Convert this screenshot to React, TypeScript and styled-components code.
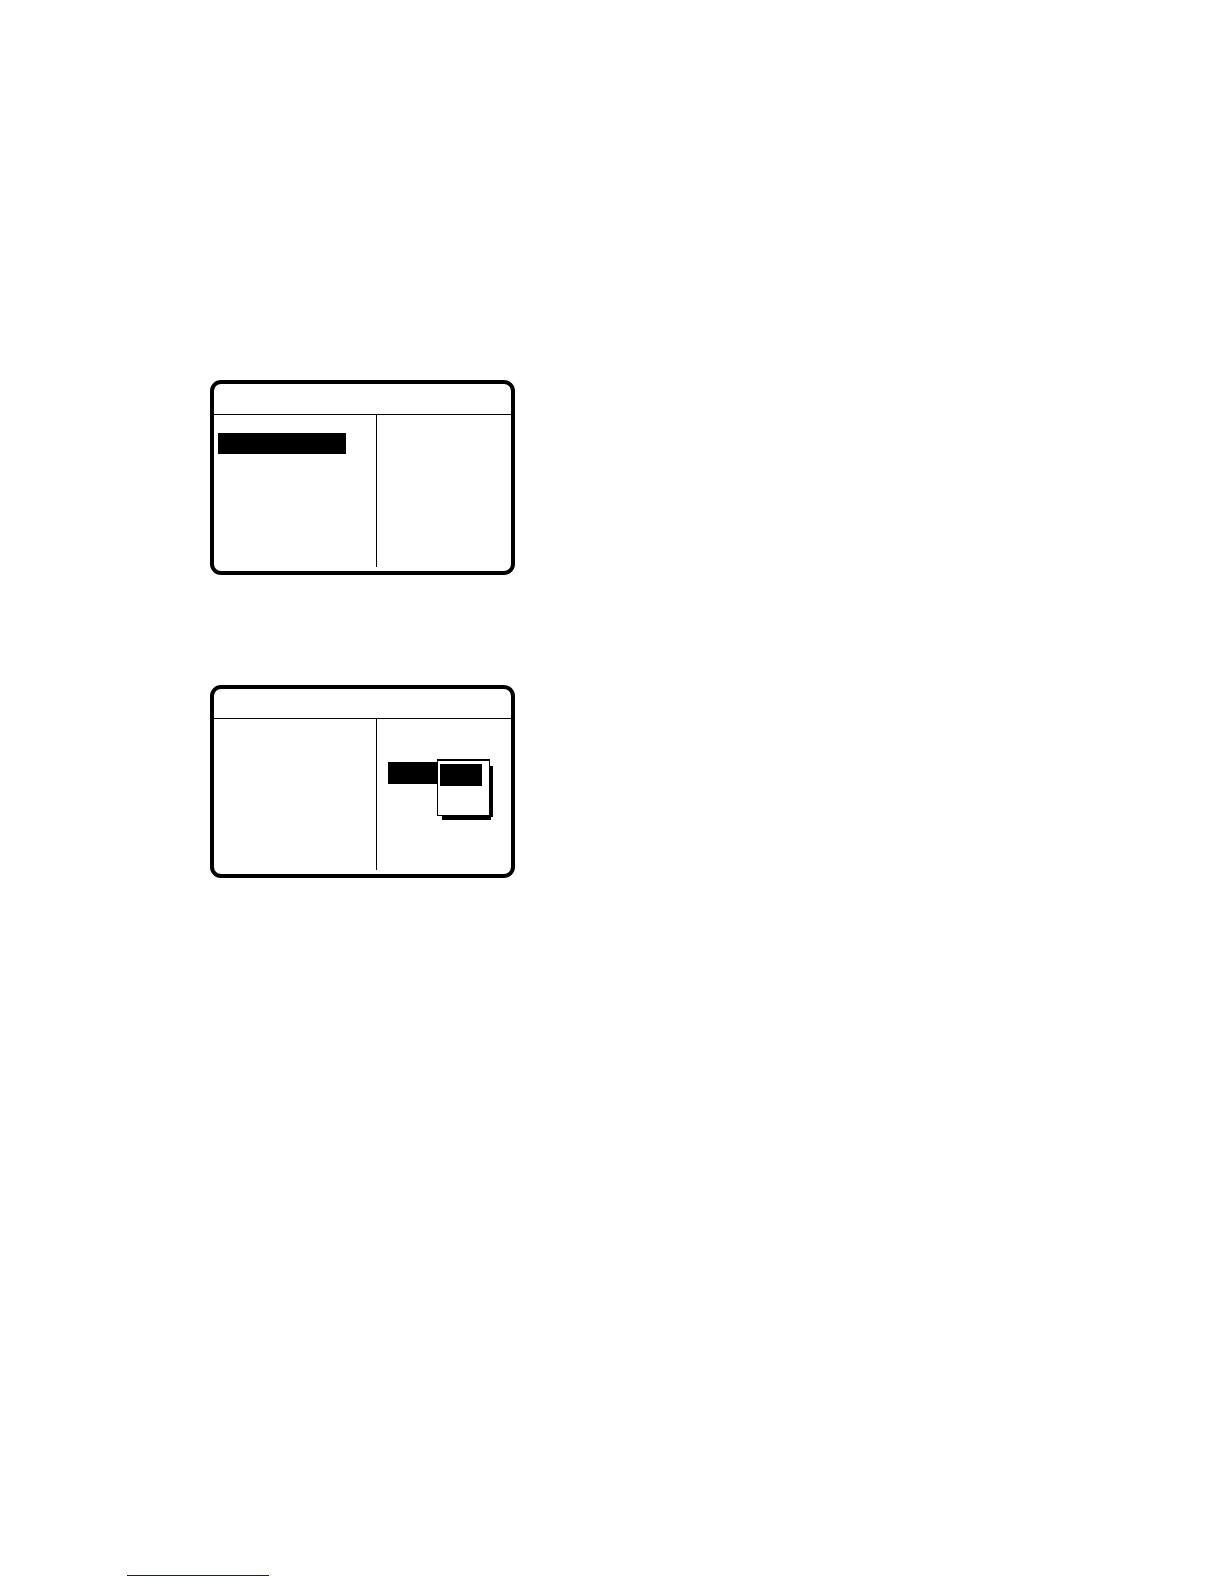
import React from "react";
import styled, { createGlobalStyle } from "styled-components";

const GlobalStyle = createGlobalStyle`
  *, *::before, *::after { box-sizing: border-box; }
  body {
    margin: 0;
    background: #fff;
    color: #000;
    font-family: "Liberation Sans", Arial, sans-serif;
  }
`;

const Page = styled.div`
  display: flex;
  flex-direction: column;
  justify-content: space-between;
  min-height: 100vh;
`;

const Screens = styled.main`
  display: flex;
  flex-direction: column;
  align-items: flex-start;
  gap: 110px;
  padding: 380px 24px 0 210px;
`;

const Screen = styled.section`
  width: 100%;
  max-width: 305px;
  padding-bottom: 4px;
  border: 4px solid #000;
  border-radius: 11px;
`;

const TitleBar = styled.header<{ $height: number }>`
  height: ${({ $height }) => $height}px;
  border-bottom: 1px solid #000;
`;

const Columns = styled.div<{ $height: number }>`
  display: grid;
  grid-template-columns: 162px 1fr;
  min-height: ${({ $height }) => $height}px;
`;

const MenuPane = styled.nav`
  padding: 18px 4px 0;
`;

const DetailPane = styled.div`
  padding: 43px 11px 0;
  border-left: 1px solid #000;
`;

const Entry = styled.button<{ $width: number; $height: number }>`
  display: block;
  width: ${({ $width }) => $width}px;
  height: ${({ $height }) => $height}px;
  padding: 0;
  border: 0;
  background: #000;
  color: #fff;
`;

const Field = styled.div`
  position: relative;
`;

const Popup = styled.div`
  position: absolute;
  top: -3px;
  left: 49px;
  width: 53px;
  height: 57px;
  padding: 3px 2px;
  border: 1px solid #000;
  border-top-width: 2px;
  background: #fff;
  box-shadow: 6px 4px 0 -3px #000, 3px 6px 0 -2px #000;
`;

const Footer = styled.footer`
  display: flex;
  padding: 0 24px 8px 127px;
`;

const FooterLink = styled.a`
  width: 142px;
  height: 16px;
  border-bottom: 1px solid #14148c;
`;

export default function App() {
  return (
    <Page>
      <GlobalStyle />
      <Screens>
        <Screen>
          <TitleBar $height={31} />
          <Columns $height={152}>
            <MenuPane>
              <Entry type="button" aria-label="Menu item" $width={128} $height={21} />
            </MenuPane>
            <DetailPane />
          </Columns>
        </Screen>
        <Screen>
          <TitleBar $height={30} />
          <Columns $height={151}>
            <MenuPane />
            <DetailPane>
              <Field>
                <Entry type="button" aria-label="Setting" aria-expanded="true" $width={49} $height={22} />
                <Popup>
                  <Entry type="button" aria-label="Option" $width={42} $height={22} />
                </Popup>
              </Field>
            </DetailPane>
          </Columns>
        </Screen>
      </Screens>
      <Footer>
        <FooterLink href="#" aria-label="Link" />
      </Footer>
    </Page>
  );
}
